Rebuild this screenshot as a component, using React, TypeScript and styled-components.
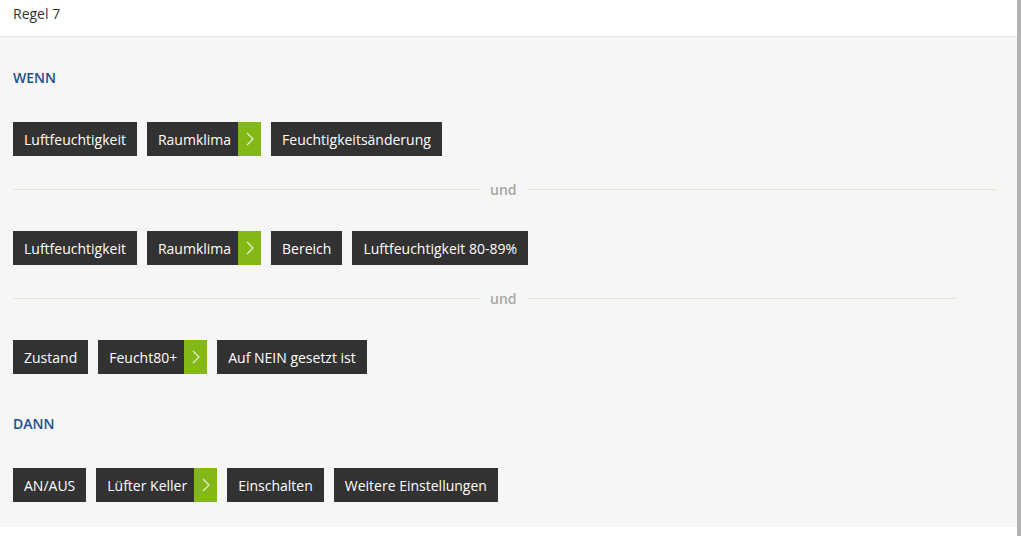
import React from "react";
import styled, { createGlobalStyle } from "styled-components";

const GlobalStyle = createGlobalStyle`
  html, body {
    margin: 0;
    padding: 0;
    background: #fff;
    font-family: "Open Sans", "Liberation Sans", Arial, sans-serif;
  }
`;

const Page = styled.div`
  display: flex;
  width: 1021px;
  height: 536px;
  overflow: hidden;
`;

const Main = styled.div`
  flex: 1;
  display: flex;
  flex-direction: column;
`;

const Scrollbar = styled.div`
  width: 4px;
  background: #b3b3b3;
`;

const Header = styled.div`
  height: 37px;
  border-bottom: 1px solid #e3e3e0;
  padding: 4px 13px 0;
  box-sizing: border-box;
  font-size: 14px;
  color: #333;
  line-height: 20px;
`;

const Panel = styled.div`
  background: #f6f6f4;
  padding: 31px 13px 25px;
  display: flex;
  flex-direction: column;
`;

const Label = styled.div<{ $top?: number }>`
  color: #1d4f8e;
  font-size: 14px;
  font-weight: 600;
  line-height: 20px;
  margin-top: ${(p) => p.$top ?? 0}px;
  margin-bottom: 34px;
`;

const Row = styled.div`
  display: flex;
  gap: 10px;
  height: 34px;
`;

const Chip = styled.div`
  display: flex;
  align-items: center;
  background: #323232;
  color: #fff;
  font-size: 14px;
  padding: 0 11px;
  height: 34px;
`;

const LinkChip = styled(Chip)`
  padding-right: 0;
`;

const Arrow = styled.span`
  display: flex;
  align-items: center;
  justify-content: center;
  width: 23px;
  height: 34px;
  margin-left: 7px;
  background: #84b817;
`;

const Divider = styled.div<{ $right: number }>`
  display: flex;
  align-items: center;
  gap: 10px;
  height: 20px;
  margin: 23px ${(p) => p.$right}px 32px 0;
  color: #a7a7a7;
  font-size: 14px;
  font-weight: 600;
`;

const Line = styled.div`
  flex: 1;
  height: 1px;
  background: #e2e2df;
`;

const LeftLine = styled.div`
  width: 467px;
  height: 1px;
  background: #e2e2df;
`;

type Item = { text: string; link?: boolean };

const Chevron = () => (
  <svg width="8" height="14" viewBox="0 0 8 14">
    <path d="M1 1 L7 7 L1 13" fill="none" stroke="#e8f2d0" strokeWidth="1.2" />
  </svg>
);

const ChipRow = ({ items }: { items: Item[] }) => (
  <Row>
    {items.map((it, i) =>
      it.link ? (
        <LinkChip key={i}>
          {it.text}
          <Arrow>
            <Chevron />
          </Arrow>
        </LinkChip>
      ) : (
        <Chip key={i}>{it.text}</Chip>
      )
    )}
  </Row>
);

const Und = ({ right }: { right: number }) => (
  <Divider $right={right}>
    <LeftLine />
    <span>und</span>
    <Line />
  </Divider>
);

export default function App() {
  return (
    <Page>
      <GlobalStyle />
      <Main>
        <Header>Regel 7</Header>
        <Panel>
          <Label>WENN</Label>
          <ChipRow
            items={[
              { text: "Luftfeuchtigkeit" },
              { text: "Raumklima", link: true },
              { text: "Feuchtigkeitsänderung" },
            ]}
          />
          <Und right={7} />
          <ChipRow
            items={[
              { text: "Luftfeuchtigkeit" },
              { text: "Raumklima", link: true },
              { text: "Bereich" },
              { text: "Luftfeuchtigkeit 80-89%" },
            ]}
          />
          <Und right={47} />
          <ChipRow
            items={[
              { text: "Zustand" },
              { text: "Feucht80+", link: true },
              { text: "Auf NEIN gesetzt ist" },
            ]}
          />
          <Label $top={40}>DANN</Label>
          <ChipRow
            items={[
              { text: "AN/AUS" },
              { text: "Lüfter Keller", link: true },
              { text: "Einschalten" },
              { text: "Weitere Einstellungen" },
            ]}
          />
        </Panel>
      </Main>
      <Scrollbar />
    </Page>
  );
}
